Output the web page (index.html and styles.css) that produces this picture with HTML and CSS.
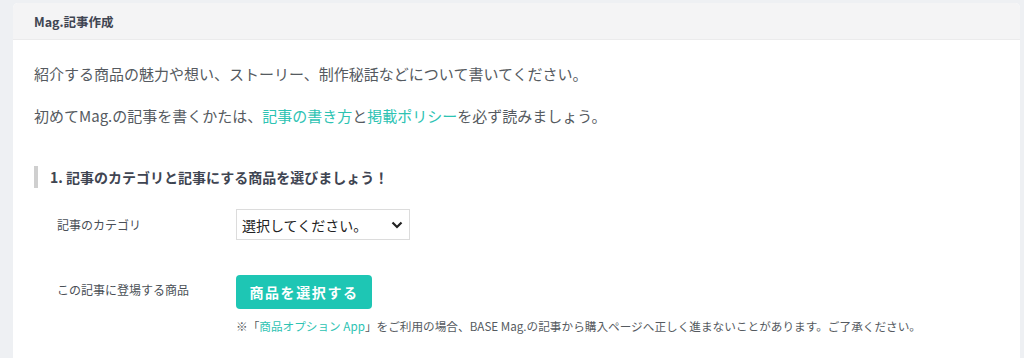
FILE: index.html
```html
<!DOCTYPE html>
<html lang="ja">
<head>
<meta charset="utf-8">
<link rel="stylesheet" href="styles.css">
</head>
<body>
<div class="card">
  <div class="card-head">Mag.記事作成</div>
  <div class="card-body">
    <p class="intro">紹介する商品の魅力や想い、ストーリー、制作秘話などについて書いてください。</p>
    <p class="intro intro-2">初めてMag.の記事を書くかたは、<a href="#">記事の書き方</a>と<a href="#">掲載ポリシー</a>を必ず読みましょう。</p>
    <h2 class="section-title">1. 記事のカテゴリと記事にする商品を選びましょう！</h2>
    <div class="form-row row-category">
      <div class="label">記事のカテゴリ</div>
      <div class="field">
        <div class="select">
          <span>選択してください。</span>
          <svg width="12" height="8" viewBox="0 0 12 8"><path d="M1.5 1.5 L6 6 L10.5 1.5" fill="none" stroke="#222" stroke-width="2.2"/></svg>
        </div>
      </div>
    </div>
    <div class="form-row row-product">
      <div class="label label-top">この記事に登場する商品</div>
      <div class="field">
        <button class="btn">商品を選択する</button>
        <p class="note">※「<a href="#">商品オプション App</a>」をご利用の場合、BASE Mag.の記事から購入ページへ正しく進まないことがあります。ご了承ください。</p>
      </div>
    </div>
  </div>
</div>
</body>
</html>
```
FILE: styles.css
```css
html, body {
  margin: 0;
  padding: 0;
}
body {
  background: #eef0f3;
  padding: 3px 4px 0 13px;
  font-family: "Noto Sans CJK JP", "Lato", sans-serif;
  color: #555a60;
  height: 358px;
  box-sizing: border-box;
  overflow: hidden;
}
.card {
  background: #fff;
  border-radius: 5px 5px 0 0;
  height: 100%;
}
.card-head {
  height: 36px;
  background: #f4f4f5;
  border-bottom: 1px solid #ebebec;
  border-radius: 5px 5px 0 0;
  padding-left: 21px;
  display: flex;
  align-items: center;
  font-size: 12.5px;
  font-weight: 700;
  color: #3f4552;
}
.card-body {
  padding: 22px 21px 0 21px;
}
.intro {
  margin: 0;
  font-size: 15px;
  line-height: 24px;
  color: #555a60;
}
.intro-2 {
  margin-top: 18px;
}
a {
  color: #2ec3b3;
  text-decoration: none;
}
.section-title {
  margin: 38px 0 0 0;
  border-left: 4px solid #cfcfcf;
  padding-left: 12px;
  font-size: 14px;
  font-weight: 700;
  line-height: 22px;
  color: #3f4552;
}
.form-row {
  display: flex;
  padding-left: 23px;
}
.row-category {
  margin-top: 21px;
  align-items: center;
}
.row-product {
  margin-top: 35px;
}
.label {
  width: 179px;
  font-size: 12px;
  color: #4a4f56;
}
.label-top {
  padding-top: 6px;
}
.select {
  width: 174px;
  height: 31px;
  box-sizing: border-box;
  border: 1px solid #dcdcdc;
  display: flex;
  align-items: center;
  justify-content: space-between;
  padding: 0 6px 0 5px;
  font-size: 14px;
  color: #222;
}
.btn {
  display: block;
  width: 136px;
  height: 34px;
  border: none;
  border-radius: 4px;
  background: #1ec6b4;
  color: #fff;
  font-family: inherit;
  font-size: 14px;
  font-weight: 700;
  letter-spacing: 1.6px;
  padding: 0;
}
.note {
  margin: 8px 0 0 0;
  font-size: 11.65px;
  line-height: 18px;
  color: #555a60;
  white-space: nowrap;
}
```
